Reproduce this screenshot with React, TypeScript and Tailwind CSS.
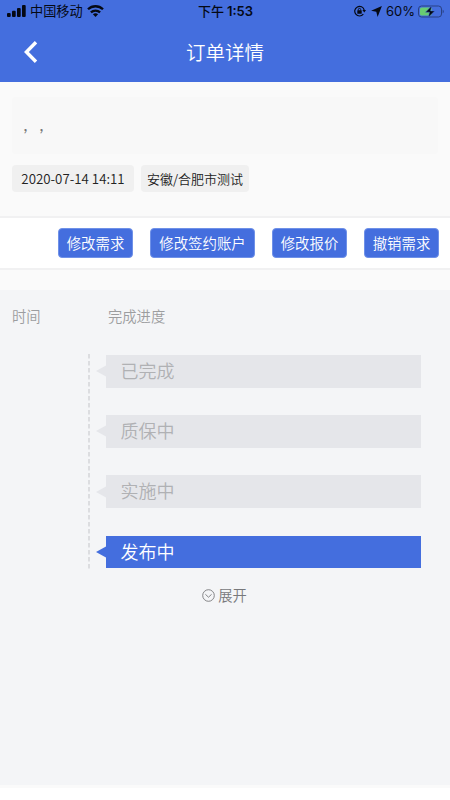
import clsx from "clsx";

const actions = [
  { label: "修改需求", width: "w-[75px]" },
  { label: "修改签约账户", width: "w-[105px]" },
  { label: "修改报价", width: "w-[75px]" },
  { label: "撤销需求", width: "w-[75px]" },
];

const steps = [
  { label: "已完成", active: false },
  { label: "质保中", active: false },
  { label: "实施中", active: false },
  { label: "发布中", active: true },
];

function SignalIcon() {
  return (
    <svg className="h-3 w-[19px]" viewBox="0 0 19 12" fill="currentColor">
      <rect x="0" y="8" width="3.7" height="4" rx="1" />
      <rect x="5" y="5.7" width="3.7" height="6.3" rx="1" />
      <rect x="10" y="3" width="3.7" height="9" rx="1" />
      <rect x="15" y="0" width="3.7" height="12" rx="1" />
    </svg>
  );
}

function WifiIcon() {
  return (
    <svg className="h-3 w-[17px]" viewBox="0 0 17 12" fill="none" stroke="currentColor" strokeWidth="2.3">
      <path d="M1 4.3C5.2.2 11.8.2 16 4.3" />
      <path d="M3.9 7.4c2.6-2.5 6.6-2.5 9.2 0" />
      <path d="M8.5 12 5.9 9.3c1.5-1.4 3.7-1.4 5.2 0Z" fill="currentColor" stroke="none" />
    </svg>
  );
}

function RotationLockIcon() {
  return (
    <svg className="h-3 w-3" viewBox="0 0 12 12" fill="none" stroke="currentColor" strokeWidth="1.2">
      <path d="M9.3 9.2A4.8 4.8 0 1 1 10.2 5" />
      <path d="M8.4 4.9H12l-1.7 2.5Z" fill="currentColor" stroke="none" />
      <rect x="3.3" y="5.3" width="4.4" height="3.4" rx=".5" fill="currentColor" stroke="none" />
      <path d="M4.3 5.5V4.6a1.2 1.2 0 0 1 2.4 0v.9" strokeWidth=".9" />
    </svg>
  );
}

function BatteryIcon() {
  return (
    <svg className="h-[13px] w-[26px]" viewBox="0 0 26 13">
      <rect x=".5" y="1" width="23" height="11" rx="3" fill="none" stroke="#294183" />
      <path d="M24.7 4.8c1.4.5 1.4 2.9 0 3.4Z" fill="#294183" />
      <rect x="2" y="2.5" width="11.8" height="8" rx="1.6" fill="#68cd72" />
      <path d="M13.6.9 7.5 7.2h4l-1.1 5 6.3-6.3h-4.1Z" fill="#050914" stroke="#446ede" strokeWidth=".5" />
    </svg>
  );
}

function StatusBar() {
  return (
    <div className="grid h-[22px] grid-cols-[1fr_auto_1fr] items-center pl-[7px] pr-[6px] text-[#050914]">
      <div className="flex items-center gap-1">
        <SignalIcon />
        <span className="text-[13.2px] leading-[22px]">中国移动</span>
        <WifiIcon />
      </div>
      <div className="flex items-center gap-[3px] text-[13px] leading-[22px] font-medium">
        <span>下午</span>
        <span className="font-['Inter'] font-semibold">1:53</span>
      </div>
      <div className="flex items-center justify-end">
        <RotationLockIcon />
        <svg className="ml-[5px] h-[11px] w-[11px]" viewBox="0 0 11 11" fill="currentColor">
          <path d="M10.9.1 6.6 10.9 5.3 5.8.1 4.7Z" />
        </svg>
        <span className="ml-1 font-['Inter'] text-[13px] leading-[22px]">60%</span>
        <span className="ml-[3px]">
          <BatteryIcon />
        </span>
      </div>
    </div>
  );
}

function Step({ label, active }: { label: string; active: boolean }) {
  return (
    <div className="flex h-[32.5px] items-center">
      <svg
        className={clsx("h-[12px] w-[10px]", active ? "text-[#446ede]" : "text-[#e5e6ea]")}
        viewBox="0 0 10 12"
        fill="currentColor"
      >
        <path d="M0 6 10 .5v11Z" />
      </svg>
      <div
        className={clsx(
          "h-full flex-1 pl-[15px] text-[18px] leading-[31px] font-[350]",
          active ? "bg-[#446ede] text-white" : "bg-[#e5e6ea] text-[#b0b1b4]"
        )}
      >
        {label}
      </div>
    </div>
  );
}

export default function App() {
  return (
    <div className="flex h-[800px] w-[450px] flex-col overflow-hidden bg-white font-['Noto_Sans_CJK_SC',sans-serif]">
      <header className="h-[82px] shrink-0 bg-[#446ede]">
        <StatusBar />
        <div className="grid h-[60px] grid-cols-[1fr_auto_1fr] items-center pl-6">
          <svg className="h-[22px] w-[14px]" viewBox="0 0 14 22" fill="none" stroke="#fff" strokeWidth="3.4">
            <path d="M12 1.2 2.4 11 12 20.8" />
          </svg>
          <h1 className="-ml-6 text-[19.5px] leading-[60px] font-[350] text-white">订单详情</h1>
        </div>
      </header>

      <main className="flex h-[706px] shrink-0 flex-col bg-[#fafafa]">
        <section className="h-[134px] px-3 pt-[15px]">
          <div className="flex h-[57px] rounded-sm bg-[#f8f8f8] pl-3 pt-[17px] font-['Lato'] text-[18px] leading-[20px] text-[#777] italic">
            <span className="w-[16px]">,</span>
            <span>,</span>
          </div>
          <div className="mt-[11px] flex gap-[7px] text-[13px] leading-[27px] font-[350] text-[#222]">
            <span className="h-[27px] w-[122px] rounded bg-[#f0f0f0] text-center text-[13.3px]">2020-07-14 14:11</span>
            <span className="h-[27px] w-[108px] rounded bg-[#f0f0f0] text-center">安徽/合肥市测试</span>
          </div>
        </section>

        <div className="flex h-[54px] items-center justify-end gap-[17px] border-y-2 border-[#f1f1f2] bg-white pr-[11px]">
          {actions.map((action) => (
            <button
              key={action.label}
              className={clsx(
                "h-[30px] rounded-[4px] border border-[#6f91e8] bg-[#446ede] text-[14.4px] leading-[28px] font-[350] text-white",
                action.width
              )}
            >
              {action.label}
            </button>
          ))}
        </div>

        <section className="mt-[20px] h-[495px] bg-[#f4f5f7]">
          <div className="flex pl-3 pt-[15px] text-[14.3px] leading-[22px] font-[350] text-[#9c9d9f]">
            <span className="w-24">时间</span>
            <span>完成进度</span>
          </div>
          <div className="mt-[28px] flex pl-[88px] pr-[29px]">
            <svg className="-mt-px h-[216px] w-[2px]" viewBox="0 0 2 216">
              <path d="M1 0v216" stroke="#d2d3d6" strokeWidth="1.4" strokeDasharray="4.5 2.5" />
            </svg>
            <div className="ml-[5.5px] flex flex-1 flex-col gap-[27.7px]">
              {steps.map((step) => (
                <Step key={step.label} label={step.label} active={step.active} />
              ))}
            </div>
          </div>
          <button className="mx-auto mt-[14px] flex items-center gap-[3px] pr-px text-[14.3px] leading-[22px] font-[350] text-[#77787b]">
            <svg className="h-[13px] w-[13px]" viewBox="0 0 13 13" fill="none" stroke="currentColor" strokeWidth=".9">
              <circle cx="6.5" cy="6.5" r="5.8" />
              <path d="m3.4 5.3 3.1 2.9 3.1-2.9" />
            </svg>
            展开
          </button>
        </section>
      </main>
    </div>
  );
}
